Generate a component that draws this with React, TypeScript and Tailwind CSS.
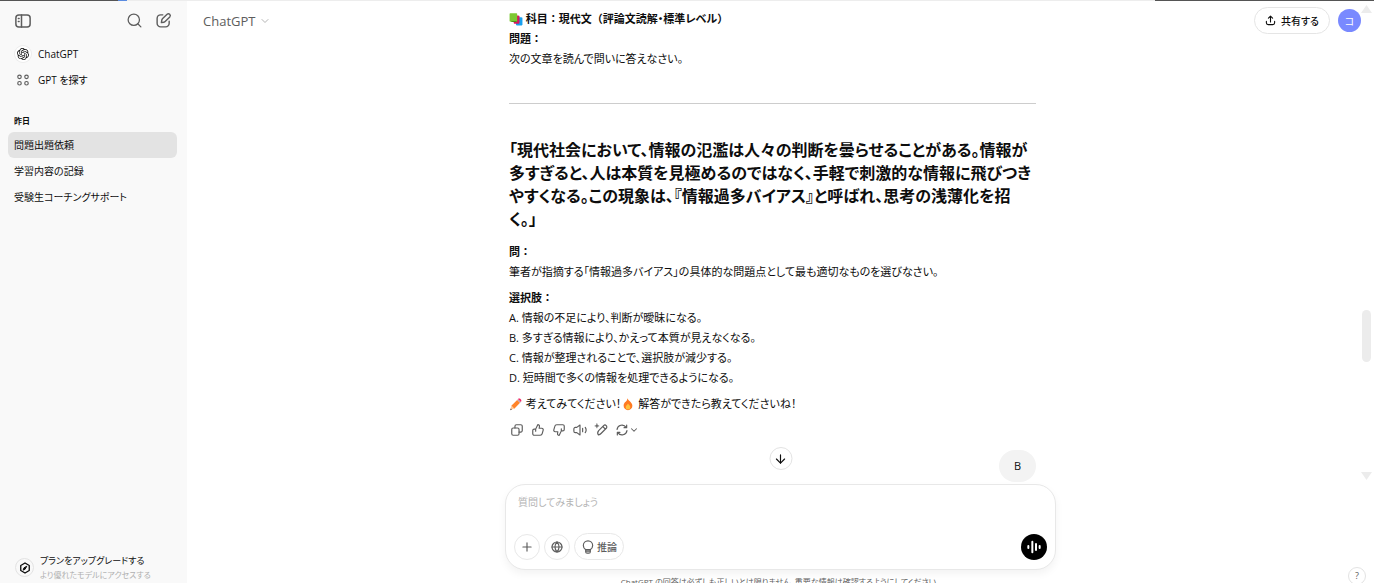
import type { ReactNode } from "react";
import { ArrowDown, ChevronDown, Globe, Plus, Search } from "lucide-react";
import { SiOpenai } from "react-icons/si";

const history = ["問題出題依頼", "学習内容の記録", "受験生コーチングサポート"];

const choices = [
  "A. 情報の不足により、判断が曖昧になる。",
  "B. 多すぎる情報により、かえって本質が見えなくなる。",
  "C. 情報が整理されることで、選択肢が減少する。",
  "D. 短時間で多くの情報を処理できるようになる。",
];

function Icon({ className, children }: { className: string; children: ReactNode }) {
  return (
    <svg
      className={className}
      viewBox="0 0 24 24"
      fill="none"
      stroke="currentColor"
      strokeWidth={2}
      strokeLinecap="round"
      strokeLinejoin="round"
      aria-hidden="true"
    >
      {children}
    </svg>
  );
}

function SidebarIcon() {
  return (
    <Icon className="size-[18px]">
      <rect x="2.5" y="4" width="19" height="16" rx="4" />
      <path d="M10 4v16M5.8 8.5h1M5.8 12.5h1" />
    </Icon>
  );
}

function ComposeIcon() {
  return (
    <Icon className="size-[17px]">
      <path d="M11 4H8a5 5 0 0 0-5 5v7a5 5 0 0 0 5 5h7a5 5 0 0 0 5-5v-3" />
      <path d="M9 15l.6-3.6a3 3 0 0 1 .9-1.7l6.6-6.6a2.7 2.7 0 0 1 3.8 3.8l-6.6 6.6a3 3 0 0 1-1.7.9z" />
    </Icon>
  );
}

function GridIcon() {
  return (
    <Icon className="size-[14px]">
      <circle cx="6" cy="6.5" r="3" />
      <circle cx="18" cy="6.5" r="3" />
      <circle cx="6" cy="17.5" r="3" />
      <circle cx="18" cy="17.5" r="3" />
    </Icon>
  );
}

function UpgradeIcon() {
  return (
    <Icon className="size-3">
      <path d="M12 2l8.5 5v10L12 22l-8.5-5V7z" strokeWidth={2.6} />
      <path d="M8.5 15.5l1.5-4 5.5-3-3 5.5z" fill="currentColor" />
    </Icon>
  );
}

function ShareIcon() {
  return (
    <Icon className="size-[11px]">
      <path d="M12 15V3M7.5 7L12 2.5 16.5 7M3 14v3a4 4 0 0 0 4 4h10a4 4 0 0 0 4-4v-3" strokeWidth={2.4} />
    </Icon>
  );
}

function CopyIcon() {
  return (
    <Icon className="size-[14px]">
      <rect x="3" y="8.5" width="12.5" height="12.5" rx="2.5" />
      <path d="M8.5 8.5v-3A2.5 2.5 0 0 1 11 3h7.5A2.5 2.5 0 0 1 21 5.5V13a2.5 2.5 0 0 1-2.5 2.5h-3" />
    </Icon>
  );
}

function ThumbIcon({ down = false }: { down?: boolean }) {
  return (
    <Icon className={down ? "size-[14px] rotate-180" : "size-[14px]"}>
      <path d="M8 10.5l3.6-7.7c1.9-.1 3.2 1.4 2.9 3.2L14 9h4.5a2.5 2.5 0 0 1 2.4 3.2l-1.7 6a3.5 3.5 0 0 1-3.4 2.8H5.5A2.5 2.5 0 0 1 3 18.5V13a2.5 2.5 0 0 1 2.5-2.5zM8 10.5V14" />
    </Icon>
  );
}

function SpeakerIcon() {
  return (
    <Icon className="size-[14px]">
      <path d="M12 3.5v17l-5.5-4H4A2.5 2.5 0 0 1 1.5 14v-4A2.5 2.5 0 0 1 4 7.5h2.5z" />
      <path d="M16.5 9v6M21 7.5a8 8 0 0 1 0 9" />
    </Icon>
  );
}

function EditIcon() {
  return (
    <Icon className="size-[14px]">
      <path d="M7.5 20.5c-1.500-2-1.500-5 .5-7.500L16.500 4.500a3 3 0 0 1 4.500 4.500L12 18c-1.500 1.500-3 2-4.500 2.500zM15 6l4.500 4.500" />
      <path d="M5 1l1 3 3 1-3 1-1 3-1-3-3-1 3-1z" fill="currentColor" strokeWidth={0.5} />
    </Icon>
  );
}

function RetryIcon() {
  return (
    <Icon className="size-[14px]">
      <path d="M3.5 11A8.5 8.5 0 0 1 19 7.500M20 3.500V8h-4.500M20.500 13A8.500 8.500 0 0 1 5 16.500M4 20.500V16h4.500" />
    </Icon>
  );
}

function BulbIcon() {
  return (
    <Icon className="size-[14px]">
      <path d="M8 16.5C5.5 15 4 12.5 4 9.5a8 8 0 0 1 16 0c0 3-1.5 5.5-4 7zM8 16.5V20a2.5 2.5 0 0 0 2.5 2.5h3A2.5 2.5 0 0 0 16 20v-3.5M8.5 19h7" />
    </Icon>
  );
}

function VoiceIcon() {
  return (
    <Icon className="size-4">
      <path d="M3.5 10.5v3M9.500 4v16M15 7.500v9M20.500 10.500v3" strokeWidth={3} />
    </Icon>
  );
}

function BooksEmoji() {
  return (
    <svg className="inline size-[14px] align-[-3px]" viewBox="0 0 24 24" role="img" aria-label="本">
      <path d="M13 9h8l2 1v11l-1 2h-9l-1-2z" fill="#18a0ee" />
      <path d="M8 6h8l2 1v11l-1 2H9l-1-1z" fill="#d6195c" />
      <path d="M1 3l1-1h11l1 1v12l-1 2H4l-3-1z" fill="#7dc832" />
      <path d="M4 15.500h9V17H5z" fill="#4c8f1b" />
    </svg>
  );
}

function PencilEmoji() {
  return (
    <svg className="inline size-[14px] align-[-3px]" viewBox="0 0 24 24" role="img" aria-label="鉛筆">
      <path d="M4 15L14 5l5 5L9 20z" fill="#ff8429" />
      <path d="M14 5l1.5-1.5 5 5L19 10z" fill="#b9a6b4" />
      <path d="M15.5 3.5C18 1 23 5 20.5 8.5z" fill="#f52463" />
      <path d="M4 15l5 5-6.5 2z" fill="#ffc894" />
      <path d="M3 19.5l-1 3 3-1z" fill="#45332f" />
    </svg>
  );
}

function FireEmoji() {
  return (
    <svg className="inline size-[14px] align-[-3px]" viewBox="0 0 24 24" role="img" aria-label="炎">
      <path d="M11 2c1 4 8.500 7 8.500 13a7.500 7.500 0 0 1-15 0c0-4 2-6 3.500-7 2-1.500 2.800-3.500 3-6z" fill="#ff7a22" />
      <path d="M12 11c.5 2 4 3 4 6.500a4 4 0 0 1-8 0c0-3 3-4 4-6.500z" fill="#ffc23d" />
    </svg>
  );
}

function Sidebar() {
  return (
    <aside className="flex w-[187px] shrink-0 flex-col bg-[#f9f9f9] text-[10px]">
      <div className="flex h-[29px] items-center pt-3 pr-[15px] pl-[14px] text-[#5d5d5d]">
        <button aria-label="サイドバーを閉じる"><SidebarIcon /></button>
        <button className="ml-auto" aria-label="検索"><Search className="size-[17px]" strokeWidth={1.8} /></button>
        <button className="ml-3" aria-label="新しいチャット"><ComposeIcon /></button>
      </div>

      <nav className="mt-3 px-2">
        <a href="#chatgpt" className="flex h-[26px] items-center gap-[7px] px-[7px]">
          <span className="flex size-4 items-center justify-center rounded-full bg-white ring-1 ring-[#ececec]">
            <SiOpenai className="size-3" />
          </span>
          ChatGPT
        </a>
        <a href="#gpts" className="flex h-[26px] items-center gap-[7px] px-[7px]">
          <span className="flex size-4 items-center justify-center text-[#5d5d5d]"><GridIcon /></span>
          GPT を探す
        </a>
      </nav>

      <section className="mt-[19px] pr-[10px] pl-2">
        <h2 className="px-[6px] text-[8px] leading-[18px] font-semibold">昨日</h2>
        <ul className="mt-[2px]">
          {history.map((title, i) => (
            <li key={title}>
              <a
                href="#chat"
                className={`flex h-[26px] items-center rounded-md px-[6px] ${i === 0 ? "bg-[#e3e3e3]" : ""}`}
              >
                {title}
              </a>
            </li>
          ))}
        </ul>
      </section>

      <button className="mt-auto flex items-center gap-[6px] px-[15px] pb-[2px] text-left">
        <span className="flex size-[19px] items-center justify-center rounded-full border border-[#e3e3e3]">
          <UpgradeIcon />
        </span>
        <span>
          <span className="block text-[9px] leading-[14px]">プランをアップグレードする</span>
          <span className="block text-[8px] leading-[13px] text-[#b0b0b0]">より優れたモデルにアクセスする</span>
        </span>
      </button>
    </aside>
  );
}

function Header() {
  return (
    <header className="absolute inset-x-0 top-0 flex items-center pt-[7px] pr-[13px] pl-4">
      <button className="flex items-center gap-1 text-[13px] leading-5 font-medium text-[#5d5d5d]">
        ChatGPT
        <ChevronDown className="size-3 text-[#b4b4b4]" />
      </button>
      <button className="ml-auto flex h-[27px] items-center gap-[5px] rounded-full border border-[#e5e5e5] px-[10px] text-[10px] font-medium">
        <ShareIcon />
        共有する
      </button>
      <button className="ml-2 size-[23px] rounded-full bg-[#7989ff] text-[10px] text-white">コ</button>
    </header>
  );
}

// Full-width punctuation keeps its em box; the rest of the text is set proportionally.
function Wide({ children }: { children: ReactNode }) {
  return <span className="[font-feature-settings:normal]">{children}</span>;
}

function Message() {
  return (
    <article className="mx-auto w-full max-w-[527px] pt-[9px]">
      <p>
        <strong className="font-semibold">
          <BooksEmoji /> 科目<Wide>：</Wide>現代文<Wide>（</Wide>評論文読解・標準レベル<Wide>）</Wide>
        </strong>
        <br />
        <strong className="font-semibold">問題<Wide>：</Wide></strong>
        <br />
        次の文章を読んで問いに答えなさい。
      </p>
      <hr className="mt-[34px] mb-[35px] border-[#cdcdcd]" />
      <h3 className="text-[16px] leading-[23px] font-semibold">
        「現代社会において、情報の氾濫は人々の判断を曇らせることがある。情報が多すぎると、人は本質を見極めるのではなく、手軽で刺激的な情報に飛びつきやすくなる。この現象は、『情報過多バイアス』と呼ばれ、思考の浅薄化を招く。」
      </h3>
      <p className="mt-[11px]">
        <strong className="font-semibold">問<Wide>：</Wide></strong>
        <br />
        筆者が指摘する「情報過多バイアス」の具体的な問題点として最も適切なものを選びなさい。
      </p>
      <p className="mt-[6px] font-semibold">選択肢<Wide>：</Wide></p>
      <ul>
        {choices.map((choice) => (
          <li key={choice}>{choice}</li>
        ))}
      </ul>
      <p className="mt-[6px]">
        <PencilEmoji /> 考えてみてください！<FireEmoji /> 解答ができたら教えてくださいね！
      </p>
      <div className="mt-[9px] flex items-center gap-[7px] px-[1px] text-[#5d5d5d]">
        <button aria-label="コピー"><CopyIcon /></button>
        <button aria-label="良い回答"><ThumbIcon /></button>
        <button aria-label="良くない回答"><ThumbIcon down /></button>
        <button aria-label="読み上げ"><SpeakerIcon /></button>
        <button aria-label="編集"><EditIcon /></button>
        <button className="flex items-center" aria-label="再生成">
          <RetryIcon />
          <ChevronDown className="size-[10px]" strokeWidth={2.5} />
        </button>
      </div>
      <div className="mt-[13px] flex justify-end">
        <p className="rounded-2xl bg-[#f3f3f3] px-[15px] py-[6px]">B</p>
      </div>
    </article>
  );
}

function Scrollbar() {
  return (
    <div className="flex w-4 shrink-0 flex-col items-center pt-[5px] pb-[4px] text-[#ececec]" aria-hidden="true">
      <svg className="h-2 w-[11px]" viewBox="0 0 11 8" fill="currentColor"><path d="M5.5 0L11 8H0z" /></svg>
      <div className="flex-[297]" />
      <div className="h-[52px] w-[9px] rounded-full bg-[#ececec]" />
      <div className="flex-[110]" />
      <svg className="h-2 w-[11px]" viewBox="0 0 11 8" fill="currentColor"><path d="M5.5 8L11 0H0z" /></svg>
    </div>
  );
}

function Composer() {
  return (
    <form className="mx-auto w-full max-w-[551px] rounded-[20px] border border-[#e8e8e8] bg-white px-2 pt-[7px] pb-[9px] shadow-[0_4px_8px_rgba(0,0,0,0.05)]">
      <input
        className="block w-full px-1 text-[10px] leading-5 outline-none placeholder:text-[#b4b4b4]"
        placeholder="質問してみましょう"
        aria-label="質問"
      />
      <div className="mt-[21px] flex items-center gap-1 text-[#5d5d5d]">
        <button type="button" className="flex size-[26px] items-center justify-center rounded-full border border-[#e8e8e8]" aria-label="追加">
          <Plus className="size-[14px]" />
        </button>
        <button type="button" className="flex size-[26px] items-center justify-center rounded-full border border-[#e8e8e8]" aria-label="検索">
          <Globe className="size-3" strokeWidth={2.4} />
        </button>
        <button type="button" className="flex h-[27px] items-center gap-[2px] rounded-full border border-[#e8e8e8] px-[6px] text-[10px] font-medium">
          <BulbIcon />
          推論
        </button>
        <button type="button" className="ml-auto flex size-[26px] items-center justify-center rounded-full bg-black text-white" aria-label="音声モード">
          <VoiceIcon />
        </button>
      </div>
    </form>
  );
}

export default function App() {
  return (
    <div className="flex h-screen flex-col overflow-hidden bg-white font-['Open_Sans','Noto_Sans_CJK_JP',sans-serif] text-[11px] leading-5 text-[#0d0d0d] [font-feature-settings:'palt']">
      <div className="absolute inset-x-0 top-0 z-10 flex h-px bg-[#ededed]">
        <div className="w-[118px] bg-[#555]" />
        <div className="w-[9px] bg-[#5a8be0]" />
        <div className="ml-auto w-[219px] bg-[#555]" />
      </div>
      <div className="flex min-h-0 flex-1">
        <Sidebar />
        <main className="relative flex min-w-0 flex-1 flex-col">
          <div className="relative flex min-h-0 flex-1">
            <div className="min-w-0 flex-1 overflow-hidden"><Message /></div>
            <Scrollbar />
            <button
              className="absolute bottom-[14px] left-1/2 flex size-[23px] -translate-x-1/2 items-center justify-center rounded-full border border-[#e3e3e3] bg-white"
              aria-label="一番下へ"
            >
              <ArrowDown className="size-[14px]" />
            </button>
          </div>
          <Composer />
          <div className="h-[13px] shrink-0 overflow-hidden pt-1 text-center text-[8px] leading-4 text-[#5d5d5d]">
            ChatGPT の回答は必ずしも正しいとは限りません。重要な情報は確認するようにしてください。
          </div>
          <Header />
          <button className="absolute right-2 -bottom-[2px] size-[18px] rounded-full border border-[#e3e3e3] bg-white text-[9px] leading-4 text-[#5d5d5d]">
            ?
          </button>
        </main>
      </div>
    </div>
  );
}
